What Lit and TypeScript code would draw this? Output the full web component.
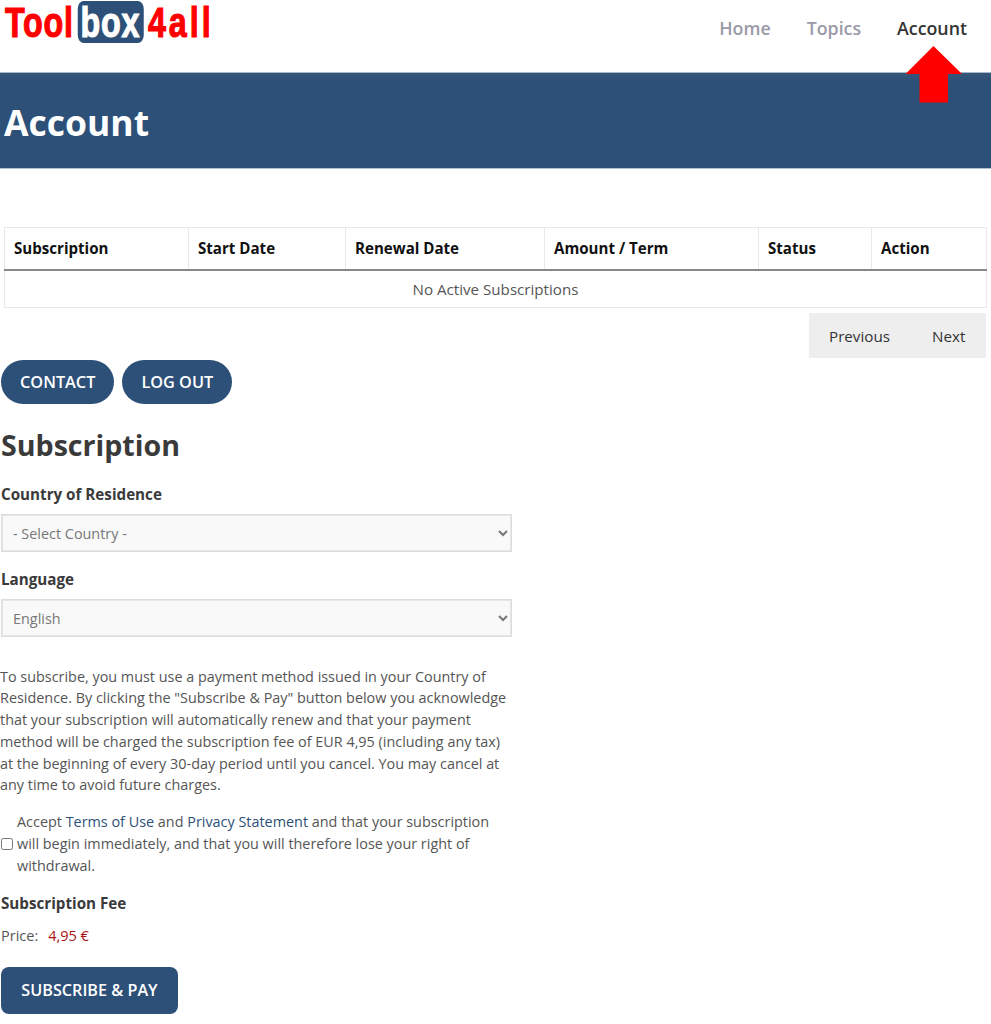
import { LitElement, html, css } from "lit";
import { customElement } from "lit/decorators.js";

@customElement("app-root")
export class AppRoot extends LitElement {
  static styles = css`
    :host { display: block; position: relative; width: 991px; height: 1024px; overflow: hidden; background: #fff; font-family: "Open Sans", sans-serif; font-size: 14.4px; line-height: 21.75px; color: #555; }
    * { box-sizing: border-box; }
    .top { height: 72px; display: flex; justify-content: space-between; align-items: flex-start; }
    .logo { display: flex; align-items: center; height: 42px; margin: 1px 0 0 5px; transform: scaleX(0.75); transform-origin: left center; font-family: "Liberation Sans", sans-serif; font-weight: 700; font-size: 43px; line-height: 50px; color: #f00; -webkit-text-stroke: 1.2px currentColor; letter-spacing: 1px; white-space: nowrap; }
    .logo .box { background: #2d5079; color: #fff; border-radius: 8px; height: 42px; line-height: 42px; width: 88px; text-align: center; margin: 0 5px; }
    .logo .four { letter-spacing: 4px; margin-left: 1px; }
    nav { display: flex; gap: 36px; margin: 16px 24px 0 0; font-size: 17.8px; font-weight: 600; line-height: 24px; color: #9a9aa8; }
    nav .on { color: #333; }
    .hero { height: 97px; background: linear-gradient(#36577b, #2d5079 8px); border-top: 1px solid #a9b8ca; border-bottom: 1px solid #b4c1d1; padding: 0 4px; display: flex; align-items: center; }
    .hero h1 { margin: 2px 0 0; color: #fff; font-size: 35.5px; line-height: 44px; font-weight: 700; }
    .arrow { position: absolute; left: 905px; top: 46px; }
    .tw { margin: 58px 5px 0 4px; }
    table { width: 982px; border-collapse: collapse; table-layout: fixed; border: 1px solid #e9e9e9; }
    th { height: 42px; padding: 2px 9px 0; text-align: left; color: #111; font-weight: 700; font-size: 15.1px; border-right: 1px solid #e9e9e9; border-bottom: 2px solid #888; }
    td { height: 38px; text-align: center; padding: 2px 0 0; font-size: 15.15px; }
    .pager { display: flex; justify-content: flex-end; margin-top: 5px; }
    .pg { display: flex; gap: 42px; height: 45px; width: 177px; padding: 2px 20px 0; background: #eee; color: #333; align-items: center; font-size: 15.2px; }
    .btns { display: flex; gap: 8px; margin: 2px 0 0 1px; }
    .pill { background: #2d5079; color: #fff; border-radius: 22px; height: 44px; padding: 1px 19px 0; display: flex; align-items: center; font-weight: 600; font-size: 16.3px; }
    .form { padding-left: 1px; width: 512px; }
    h2 { margin: 23px 0 0; font-size: 28.6px; line-height: 36px; font-weight: 700; color: #3a3a3a; }
    .lb { display: block; font-weight: 700; color: #3a3a3a; font-size: 15.2px; }
    .l1 { margin-top: 21px; }
    .l2 { margin-top: 17px; }
    select { display: block; width: 511px; height: 38px; margin-top: 8px; background: #f9f9f9; border: 1px solid #ddd; box-shadow: inset 0 0 0 1px #e6e6e6; border-radius: 0; padding: 2px 7px 0; color: #777; font-family: inherit; font-size: 14.4px; }
    p { margin: 29px 0 0 -1px; width: 511px; }
    .acc { display: flex; align-items: center; gap: 4px; margin-top: 15px; width: 500px; }
    input { margin: 0; width: 12px; height: 12px; flex: none; }
    a { color: #2d5079; text-decoration: none; }
    .fee { margin-top: 17px; }
    .price { margin-top: 10px; display: flex; gap: 10px; font-size: 14.5px; }
    .price b { font-weight: 400; color: #a80f0f; }
    .pay { margin-top: 20px; width: 177px; height: 47px; border-radius: 8px; padding-top: 1px; background: #2d5079; color: #fff; display: flex; align-items: center; justify-content: center; font-weight: 600; font-size: 16.2px; }
  `;

  render() {
    return html`
      <div class="top">
        <div class="logo"><span>Tool</span><span class="box">box</span><span class="four">4all</span></div>
        <nav><span>Home</span><span>Topics</span><span class="on">Account</span></nav>
      </div>
      <div class="hero"><h1>Account</h1></div>
      <svg class="arrow" width="58" height="58" viewBox="0 0 58 58"><path d="M28.5 0 L57 28 L43 28 L43 56.5 L14.5 56.5 L14.5 28 L0.5 28 Z" fill="#f00"/></svg>
      <div class="tw">
        <table>
          <colgroup><col style="width:184px"><col style="width:157px"><col style="width:199px"><col style="width:214px"><col style="width:113px"><col style="width:115px"></colgroup>
          <tr><th>Subscription</th><th>Start Date</th><th>Renewal Date</th><th>Amount / Term</th><th>Status</th><th>Action</th></tr>
          <tr><td colspan="6">No Active Subscriptions</td></tr>
        </table>
        <div class="pager"><div class="pg"><span>Previous</span><span>Next</span></div></div>
      </div>
      <div class="btns"><div class="pill">CONTACT</div><div class="pill">LOG OUT</div></div>
      <div class="form">
        <h2>Subscription</h2>
        <label class="lb l1">Country of Residence</label>
        <select><option>- Select Country -</option></select>
        <label class="lb l2">Language</label>
        <select><option>English</option></select>
        <p>To subscribe, you must use a payment method issued in your Country of Residence. By clicking the "Subscribe &amp; Pay" button below you acknowledge that your subscription will automatically renew and that your payment method will be charged the subscription fee of EUR 4,95 (including any tax) at the beginning of every 30-day period until you cancel. You may cancel at any time to avoid future charges.</p>
        <div class="acc"><input type="checkbox"><span>Accept <a>Terms of Use</a> and <a>Privacy Statement</a> and that your subscription will begin immediately, and that you will therefore lose your right of withdrawal.</span></div>
        <div class="lb fee">Subscription Fee</div>
        <div class="price"><span>Price:</span><b>4,95 €</b></div>
        <div class="pay">SUBSCRIBE &amp; PAY</div>
      </div>
    `;
  }
}
